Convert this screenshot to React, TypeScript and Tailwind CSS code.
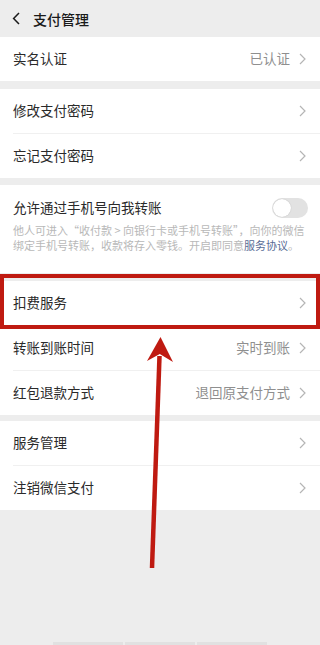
import React from "react";

const Chevron = () => (
  <svg width="7" height="12" viewBox="0 0 7 12" className="shrink-0">
    <path d="M1 1l5 5-5 5" fill="none" stroke="#b5b5b5" strokeWidth="1.2" />
  </svg>
);

const Row = ({ label, value }: { label: string; value?: string }) => (
  <div className="h-[44px] flex items-center pl-[13px] pr-[14px] bg-white">
    <span className="flex-1 text-[13.5px] text-[#2a2a2a] leading-none">{label}</span>
    {value && <span className="text-[13.5px] text-[#8f8f8f] leading-none mr-[9px]">{value}</span>}
    <Chevron />
  </div>
);

const Divider = () => (
  <div className="bg-white">
    <div className="ml-[13px] h-px bg-[#f0f0f0]" />
  </div>
);

export default function App() {
  return (
    <div
      className="relative w-[320px] h-[645px] overflow-hidden bg-[#ededed] flex flex-col"
      style={{ fontFamily: '"Noto Sans CJK SC", "Noto Sans", sans-serif' }}
    >
      {/* header */}
      <div className="h-[37px] flex items-center pl-[12px] shrink-0">
        <svg width="9" height="13" viewBox="0 0 9 13" className="shrink-0">
          <path d="M7 1L1.6 6.5 7 12" fill="none" stroke="#1a1a1a" strokeWidth="1.5" />
        </svg>
        <span className="ml-[12px] text-[14px] font-medium text-[#1a1a1a] leading-none">支付管理</span>
      </div>

      <Row label="实名认证" value="已认证" />

      <div className="h-[8px] shrink-0" />
      <Row label="修改支付密码" />
      <Divider />
      <Row label="忘记支付密码" />

      <div className="h-[7px] shrink-0" />
      <div className="h-[88px] bg-white pl-[13px] pr-[12px] pt-[12px] shrink-0">
        <div className="flex items-center h-[21px]">
          <span className="flex-1 text-[13.5px] text-[#2a2a2a] leading-none">允许通过手机号向我转账</span>
          <div className="w-[36px] h-[20px] rounded-full bg-[#e2e2e2] flex items-center pl-[1px]">
            <div className="w-[18px] h-[18px] rounded-full bg-white shadow-[0_0_1px_rgba(0,0,0,0.25)]" />
          </div>
        </div>
        <div className="mt-[5px] text-[11px] leading-[15px] text-[#b8b8b8] whitespace-nowrap">
          <div>他人可进入“收付款 &gt; 向银行卡或手机号转账”，向你的微信</div>
          <div>
            绑定手机号转账，收款将存入零钱。开启即同意<span className="text-[#576b95]">服务协议</span>。
          </div>
        </div>
      </div>

      <div className="h-[8px] shrink-0" />
      <div className="relative">
        <Row label="扣费服务" />
        <div className="absolute left-0 right-0 top-[-7px] bottom-[-4px] border-[4px] border-[#bf1a11] pointer-events-none" />
      </div>
      <Divider />
      <Row label="转账到账时间" value="实时到账" />
      <Divider />
      <Row label="红包退款方式" value="退回原支付方式" />

      <div className="h-[6px] shrink-0" />
      <Row label="服务管理" />
      <Divider />
      <Row label="注销微信支付" />

      <div className="mt-auto flex justify-center gap-[2px] h-[3px]">
        <div className="w-[70px] bg-[#e1e1e1]" />
        <div className="w-[70px] bg-[#e1e1e1]" />
        <div className="w-[70px] bg-[#e1e1e1]" />
      </div>

      {/* annotation arrow */}
      <svg
        className="absolute inset-0 pointer-events-none"
        width="320"
        height="645"
        viewBox="0 0 320 645"
      >
        <line x1="152" y1="568" x2="159.5" y2="356" stroke="#bf1a11" strokeWidth="4.5" />
        <path d="M160.5 337 L147 361 L159.8 354 L173 362 Z" fill="#bf1a11" />
      </svg>
    </div>
  );
}
